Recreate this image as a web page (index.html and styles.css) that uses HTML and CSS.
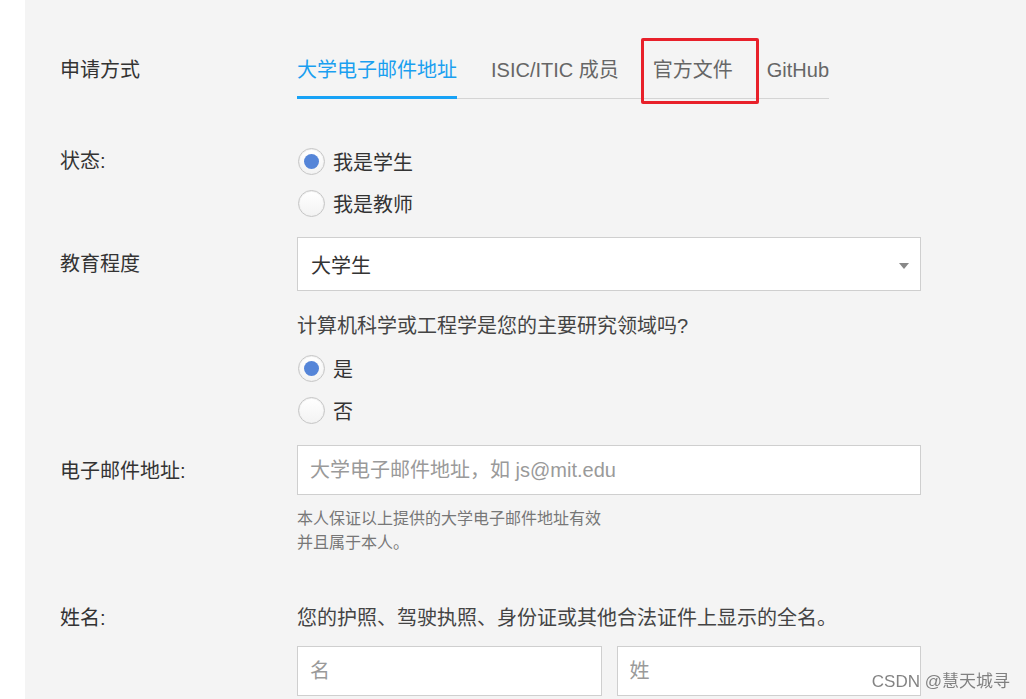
FILE: index.html
```html
<!DOCTYPE html>
<html lang="zh">
<head>
<meta charset="utf-8">
<title>申请方式</title>
<link rel="stylesheet" href="styles.css">
</head>
<body>
<div class="page">
  <div class="strip"></div>
  <main class="main">
    <div class="row row-tabs">
      <div class="label">申请方式</div>
      <div class="tabs">
        <div class="tab active">大学电子邮件地址</div>
        <div class="tab">ISIC/ITIC 成员</div>
        <div class="tab">官方文件</div>
        <div class="tab">GitHub</div>
        <div class="mark"></div>
      </div>
    </div>

    <div class="row row-status">
      <div class="label radio-label">状态:</div>
      <div class="radios">
        <div class="radio-opt"><span class="radio checked"></span><span>我是学生</span></div>
        <div class="radio-opt"><span class="radio"></span><span>我是教师</span></div>
      </div>
    </div>

    <div class="row row-edu">
      <div class="label select-label">教育程度</div>
      <div class="select"><span>大学生</span><span class="arrow"></span></div>
    </div>

    <div class="row row-question">
      <div class="label"></div>
      <div class="content">
        <div class="question">计算机科学或工程学是您的主要研究领域吗?</div>
        <div class="radios radios-q">
          <div class="radio-opt"><span class="radio checked"></span><span>是</span></div>
          <div class="radio-opt"><span class="radio"></span><span>否</span></div>
        </div>
      </div>
    </div>

    <div class="row row-email">
      <div class="label input-label">电子邮件地址:</div>
      <div class="content">
        <div class="input"><span class="placeholder">大学电子邮件地址，如 js@mit.edu</span></div>
        <p class="help">本人保证以上提供的大学电子邮件地址有效<br>并且属于本人。</p>
      </div>
    </div>

    <div class="row row-name">
      <div class="label">姓名:</div>
      <div class="content">
        <div class="name-hint">您的护照、驾驶执照、身份证或其他合法证件上显示的全名。</div>
        <div class="name-inputs">
          <div class="input half"><span class="placeholder">名</span></div>
          <div class="input half"><span class="placeholder">姓</span></div>
        </div>
      </div>
    </div>
  </main>
</div>
<div class="watermark">CSDN @慧天城寻</div>
</body>
</html>
```

FILE: styles.css
```css
html, body {
  margin: 0;
  padding: 0;
  height: 100%;
  overflow: hidden;
  background: #ffffff;
  font-family: "Liberation Sans", "Noto Sans CJK SC", sans-serif;
  color: #333333;
  font-size: 20px;
}

.page {
  display: flex;
  height: 699px;
}

.strip {
  width: 25px;
  flex: none;
  background: #ffffff;
}

.main {
  flex: 1;
  background: #f4f4f4;
  padding: 55px 0 0 35px;
}

.row {
  display: flex;
  align-items: flex-start;
}

.label {
  width: 237px;
  flex: none;
  line-height: 30px;
  color: #333333;
}

.content {
  width: 624px;
  display: flex;
  flex-direction: column;
}

/* tabs */
.tabs {
  position: relative;
  display: flex;
  gap: 34px;
  border-bottom: 1px solid #d4d4d4;
  height: 43px;
}

.tab {
  line-height: 30px;
  padding-bottom: 11px;
  color: #666666;
  white-space: nowrap;
}

.tab.active {
  color: #1a9ff0;
  border-bottom: 3px solid #17a2f6;
  margin-bottom: -1px;
}

.mark {
  position: absolute;
  left: 344px;
  top: -17px;
  width: 112px;
  height: 60px;
  border: 3px solid #e8202a;
  border-radius: 2px;
}

/* radios */
.row-status {
  margin-top: 41px;
}

.radio-label {
  line-height: 42px;
}

.radios {
  display: flex;
  flex-direction: column;
}

.radio-opt {
  display: flex;
  align-items: center;
  height: 42px;
  gap: 8px;
  color: #333333;
}

.radio {
  box-sizing: border-box;
  width: 27px;
  height: 27px;
  margin-left: 1px;
  border-radius: 50%;
  border: 1px solid #c6c6c6;
  background: linear-gradient(#ffffff, #f3f3f3);
  box-shadow: inset 0 0 0 1px #f0f0f0;
  display: flex;
  align-items: center;
  justify-content: center;
}

.radio.checked::after {
  content: "";
  width: 15px;
  height: 15px;
  border-radius: 50%;
  background: #5585d8;
}

/* select */
.row-edu {
  margin-top: 13px;
}

.select-label {
  line-height: 54px;
}

.select {
  box-sizing: border-box;
  width: 624px;
  height: 54px;
  background: #ffffff;
  border: 1px solid #cfcfcf;
  display: flex;
  align-items: center;
  justify-content: space-between;
  padding: 0 11px 0 13px;
  color: #333333;
}

.arrow {
  width: 0;
  height: 0;
  border-left: 5px solid transparent;
  border-right: 5px solid transparent;
  border-top: 6px solid #888888;
  margin-top: 3px;
}

/* question */
.row-question {
  margin-top: 20px;
}

.question {
  line-height: 30px;
  color: #444444;
}

.radios-q {
  margin-top: 6px;
}

/* inputs */
.row-email {
  margin-top: 14px;
}

.input-label {
  line-height: 52px;
}

.input {
  box-sizing: border-box;
  height: 50px;
  background: #ffffff;
  border: 1px solid #cfcfcf;
  display: flex;
  align-items: center;
  padding: 0 12px;
}

.placeholder {
  color: #9a9a9a;
  margin-top: -3px;
}

.help {
  margin: 12px 0 0 0;
  font-size: 16px;
  line-height: 24px;
  color: #777777;
}

/* name */
.row-name {
  margin-top: 48px;
}

.name-hint {
  line-height: 30px;
  color: #444444;
}

.name-inputs {
  margin-top: 13px;
  display: flex;
  gap: 15px;
}

.input.half {
  flex: 1;
}

.watermark {
  position: fixed;
  right: 16px;
  bottom: 6px;
  font-size: 17px;
  line-height: 22px;
  color: rgba(90, 90, 90, 0.75);
  font-family: "Liberation Sans", "Noto Sans CJK SC", sans-serif;
}
```
